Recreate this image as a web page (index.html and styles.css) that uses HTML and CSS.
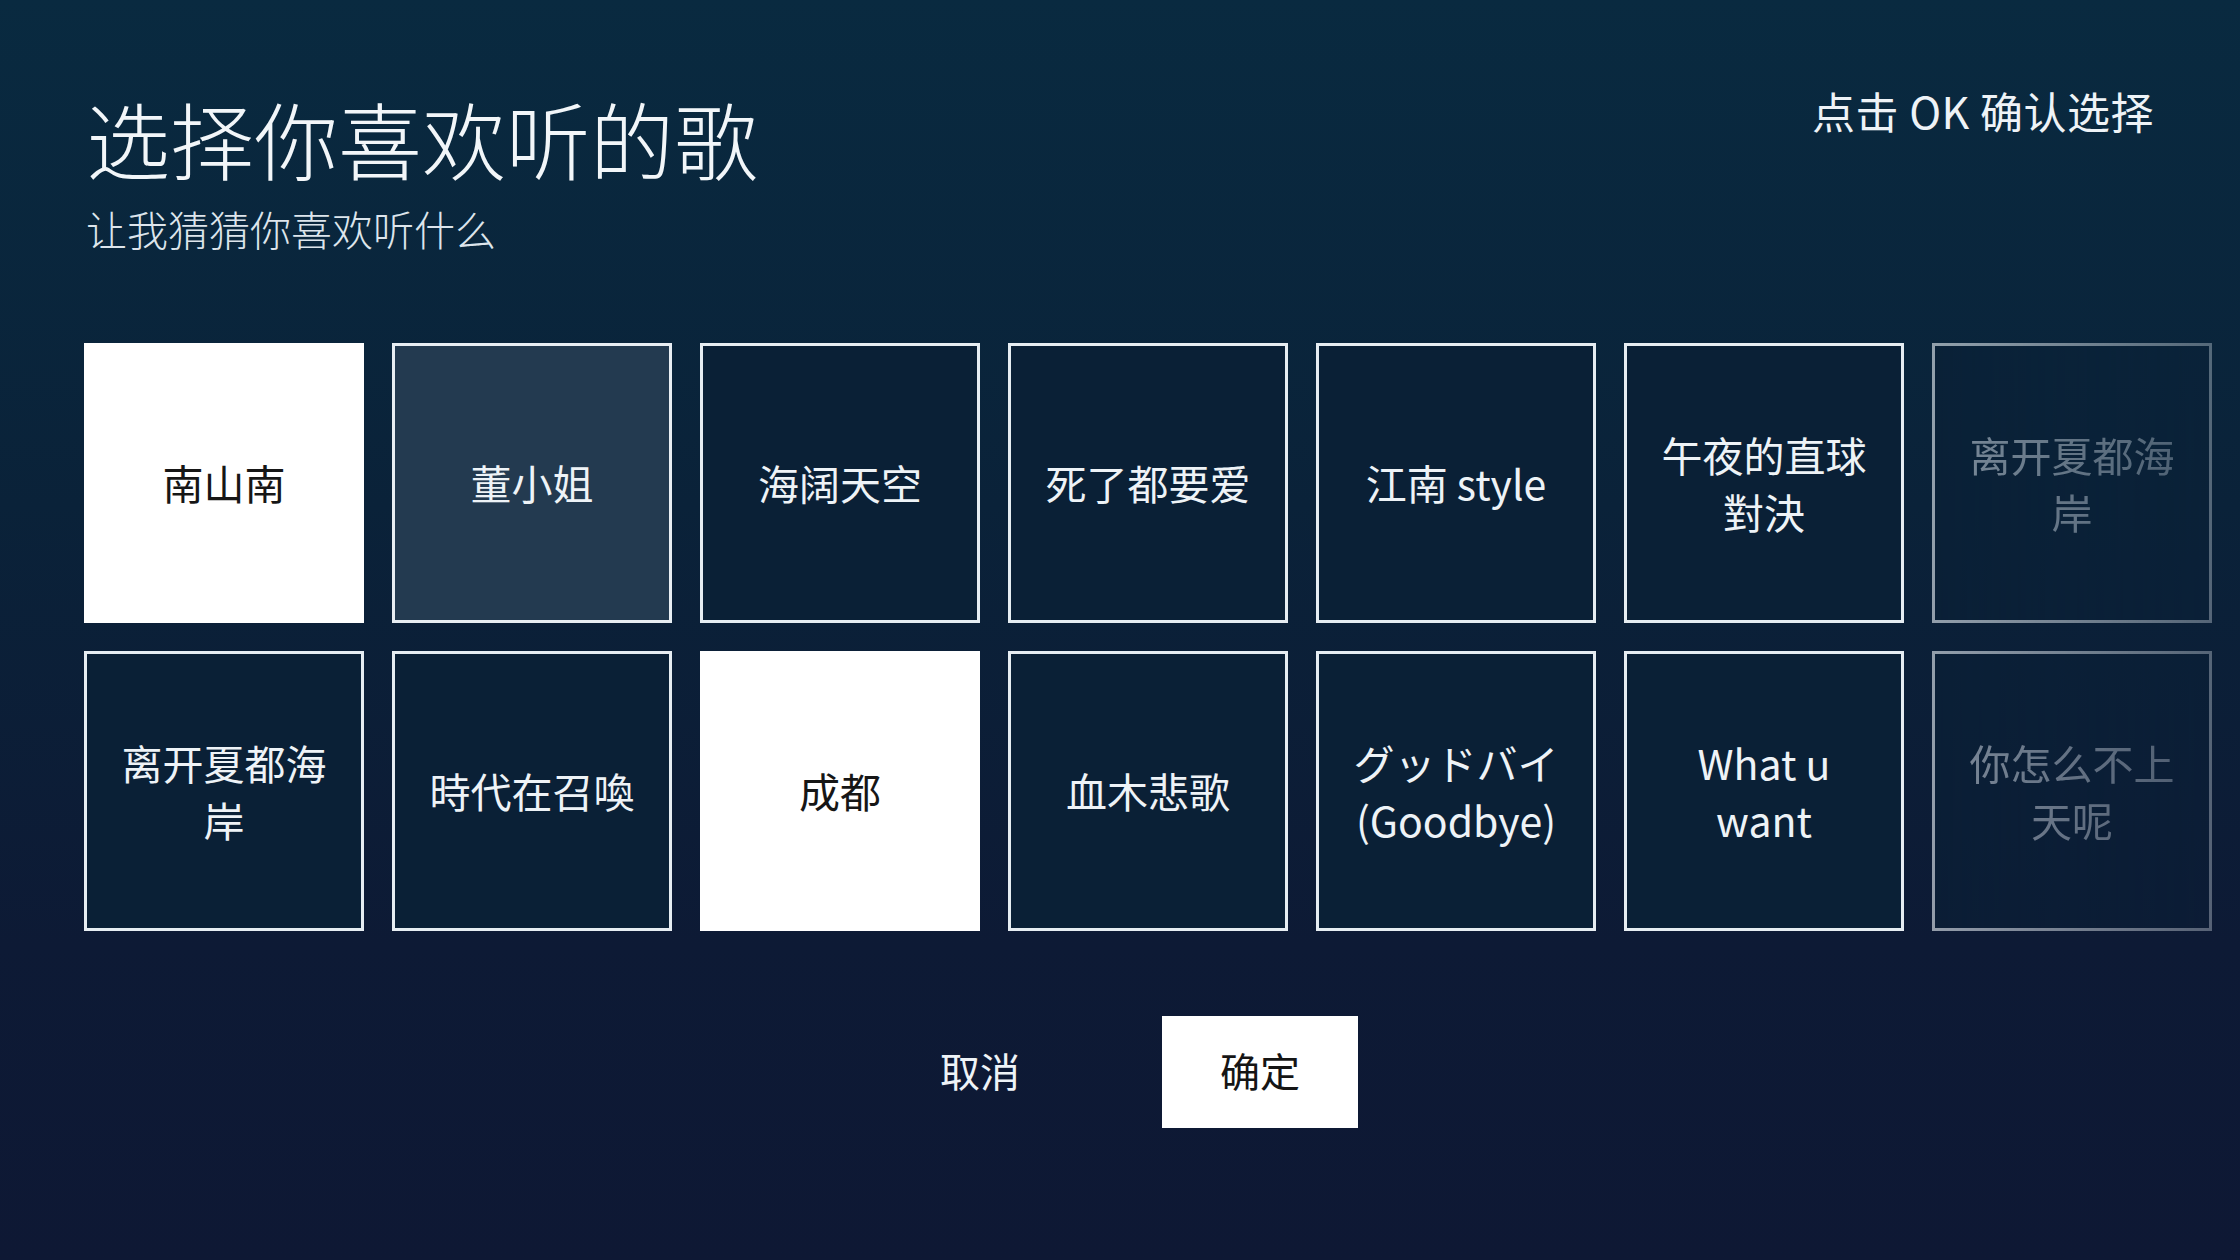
FILE: index.html
```html
<!DOCTYPE html>
<html lang="zh-CN">
<head>
<meta charset="utf-8">
<title>选择你喜欢听的歌</title>
<link rel="stylesheet" href="styles.css">
</head>
<body>
<div class="page">
  <header class="header">
    <div class="heading">
      <h1 class="title">选择你喜欢听的歌</h1>
      <p class="subtitle">让我猜猜你喜欢听什么</p>
    </div>
    <div class="hint">点击 OK 确认选择</div>
  </header>

  <section class="grid">
    <div class="card selected"><span>南山南</span></div>
    <div class="card focused"><span>董小姐</span></div>
    <div class="card"><span>海阔天空</span></div>
    <div class="card"><span>死了都要爱</span></div>
    <div class="card"><span>江南 style</span></div>
    <div class="card"><span>午夜的直球對決</span></div>
    <div class="card fade"><span>离开夏都海岸</span></div>

    <div class="card"><span>离开夏都海岸</span></div>
    <div class="card"><span>時代在召喚</span></div>
    <div class="card selected"><span>成都</span></div>
    <div class="card"><span>血木悲歌</span></div>
    <div class="card"><span>グッドバイ (Goodbye)</span></div>
    <div class="card"><span>What u want</span></div>
    <div class="card fade"><span>你怎么不上天呢</span></div>
  </section>

  <div class="actions">
    <div class="btn">取消</div>
    <div class="btn primary">确定</div>
  </div>
</div>
</body>
</html>
```

FILE: styles.css
```css
html, body {
  margin: 0;
  padding: 0;
}

body {
  width: 2240px;
  height: 1260px;
  overflow: hidden;
  background: linear-gradient(180deg, #092a40 0%, #0a2239 40%, #0d1a35 75%, #0e1834 100%);
  font-family: "Noto Sans CJK SC", "Noto Sans", sans-serif;
  color: #eef3f7;
}

.page {
  display: flex;
  flex-direction: column;
  padding: 81px 86px 0 84px;
  box-sizing: border-box;
  height: 1260px;
}

.header {
  display: flex;
  justify-content: space-between;
  align-items: flex-start;
}

.heading {
  padding-top: 7px;
  padding-left: 2px;
}

.title {
  margin: 0;
  font-size: 84px;
  line-height: 1.2;
  font-weight: 300;
  color: #f2f6f9;
}

.subtitle {
  margin: 15px 0 0 0;
  font-size: 41px;
  line-height: 1.2;
  font-weight: 300;
  color: #dde5ec;
}

.hint {
  margin-top: 4px;
  font-size: 43px;
  line-height: 1.2;
  letter-spacing: 0.5px;
  color: #eef3f7;
}

.grid {
  display: grid;
  grid-template-columns: repeat(7, 280px);
  grid-auto-rows: 280px;
  gap: 28px;
  margin-top: 90px;
}

.card {
  box-sizing: border-box;
  border: 3px solid #e6edf2;
  background: #0a2036;
  display: flex;
  align-items: center;
  justify-content: center;
  text-align: center;
  padding: 0 30px;
  font-size: 41px;
  line-height: 57px;
  color: #eef3f7;
}

.card.selected {
  background: #ffffff;
  border-color: #ffffff;
  color: #161616;
}

.card.focused {
  background: #233a50;
  border-color: #e8eef3;
}

.card.fade {
  opacity: 0.62;
  -webkit-mask-image: linear-gradient(90deg, #000 0%, rgba(0,0,0,0.55) 100%);
  mask-image: linear-gradient(90deg, #000 0%, rgba(0,0,0,0.55) 100%);
}

.card.fade span {
  color: #c3cdd7;
}

.actions {
  display: flex;
  justify-content: center;
  gap: 84px;
  margin-top: 85px;
  margin-left: -84px;
  margin-right: -86px;
}

.btn {
  width: 196px;
  height: 112px;
  display: flex;
  align-items: center;
  justify-content: center;
  font-size: 40px;
  padding-bottom: 3px;
  box-sizing: border-box;
  color: #eef3f7;
}

.btn.primary {
  background: #ffffff;
  color: #151515;
}
```
